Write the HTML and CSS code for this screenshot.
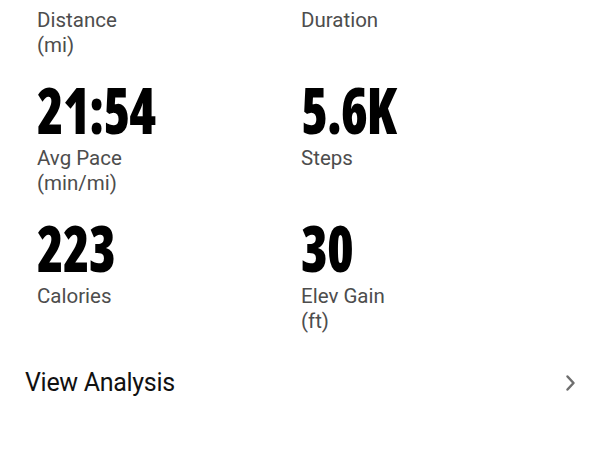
FILE: index.html
```html
<!DOCTYPE html>
<html lang="en">
<head>
<meta charset="utf-8">
<title>Run Summary</title>
<link rel="stylesheet" href="styles.css">
</head>
<body>
<main class="summary">
  <section class="stats">
    <div class="stat stat-first">
      <div class="label">Distance<br>(mi)</div>
    </div>
    <div class="stat stat-first">
      <div class="label">Duration</div>
    </div>
    <div class="stat">
      <div class="value">21:54</div>
      <div class="label">Avg Pace<br>(min/mi)</div>
    </div>
    <div class="stat">
      <div class="value">5.6K</div>
      <div class="label">Steps</div>
    </div>
    <div class="stat">
      <div class="value">223</div>
      <div class="label">Calories</div>
    </div>
    <div class="stat">
      <div class="value">30</div>
      <div class="label">Elev Gain<br>(ft)</div>
    </div>
  </section>
  <a class="analysis" href="#">
    <span class="analysis-text">View Analysis</span>
    <svg class="chevron" width="12" height="18" viewBox="0 0 12 18" aria-hidden="true">
      <polyline points="3.5,2.5 9.5,9 3.5,15.5" fill="none" stroke="#6e6e6e" stroke-width="2.5" stroke-linecap="round" stroke-linejoin="round"/>
    </svg>
  </a>
</main>
</body>
</html>
```

FILE: styles.css
```css
html, body {
  margin: 0;
  padding: 0;
  background: #ffffff;
}

body {
  width: 600px;
  height: 450px;
  overflow: hidden;
  font-family: Roboto, "Liberation Sans", sans-serif;
}

.summary {
  display: flex;
  flex-direction: column;
}

.stats {
  display: grid;
  grid-template-columns: 264px 264px;
  row-gap: 22px;
  padding: 8px 0 0 37px;
}

.stat {
  display: flex;
  flex-direction: column;
}

.value {
  font-family: "Open Sans", sans-serif;
  font-weight: 800;
  font-stretch: 75%;
  font-size: 63px;
  line-height: 60px;
  color: #000000;
  letter-spacing: -1px;
  transform: scaleX(0.86);
  transform-origin: left center;
}

.label {
  margin-top: 6px;
  font-size: 20.5px;
  line-height: 25px;
  color: #4d4d4d;
}

.stat-first .label {
  margin-top: 0;
}

.analysis {
  display: flex;
  align-items: center;
  justify-content: space-between;
  margin-top: 34px;
  padding: 0 24px 0 25px;
  height: 30px;
  text-decoration: none;
}

.analysis-text {
  font-size: 25px;
  line-height: 30px;
  color: #111111;
  letter-spacing: -0.3px;
}

.chevron {
  display: block;
}
```
